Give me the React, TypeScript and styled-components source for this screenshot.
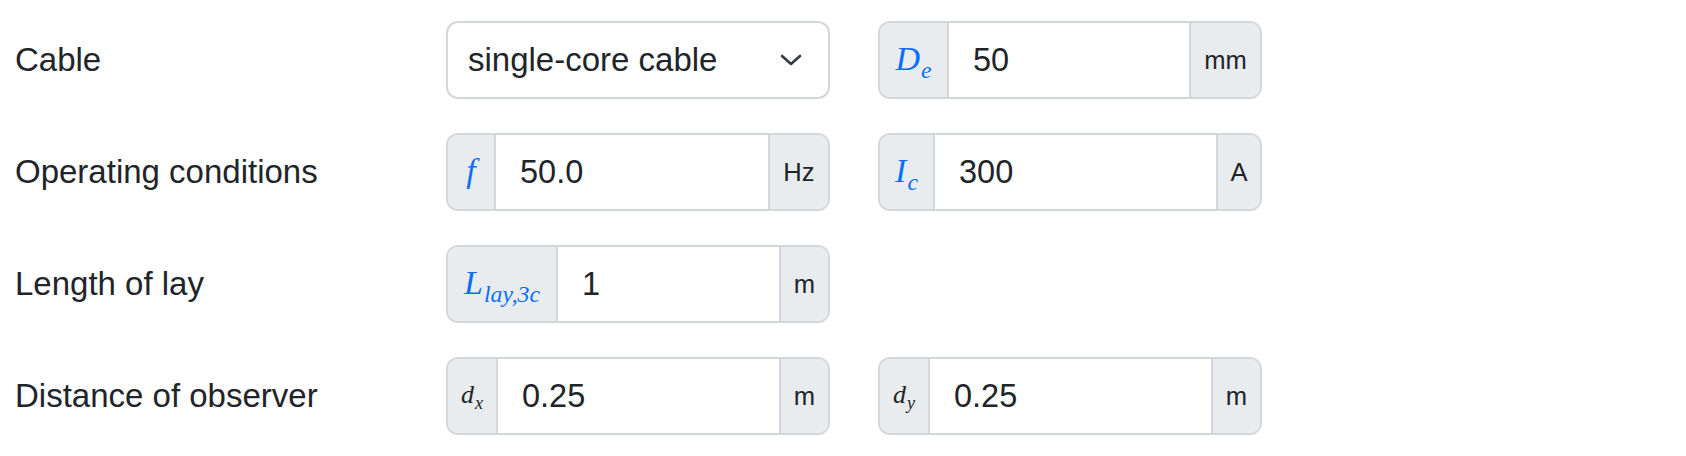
import React from 'react'
import styled, { createGlobalStyle } from 'styled-components'

const GlobalStyle = createGlobalStyle`
    html, body {
        margin: 0;
        padding: 0;
        background: #ffffff;
    }
    body {
        font-family: 'Liberation Sans', Arial, sans-serif;
        color: #212529;
    }
`

const Form = styled.div`
    display: grid;
    grid-template-columns: 383px 384px 384px;
    column-gap: 48px;
    row-gap: 34px;
    padding: 21px 0 21px 15px;
`

const Label = styled.div`
    display: flex;
    align-items: center;
    height: 78px;
    font-size: 33px;
    color: #212529;
`

const Select = styled.div`
    display: flex;
    align-items: center;
    justify-content: space-between;
    box-sizing: border-box;
    height: 78px;
    padding: 0 26px 0 20px;
    border: 2px solid #d3d7dc;
    border-radius: 12px;
    background: #ffffff;
    font-size: 33px;
    color: #212529;
`

const Group = styled.div`
    display: flex;
    align-items: stretch;
    box-sizing: border-box;
    height: 78px;
    border: 2px solid #d3d7dc;
    border-radius: 12px;
    overflow: hidden;
`

const Addon = styled.div<{ $side: 'left' | 'right'; $width: number }>`
    display: flex;
    align-items: center;
    justify-content: center;
    flex: 0 0 ${(p) => p.$width}px;
    box-sizing: border-box;
    background: #e9ecef;
    font-size: 25.6px;
    color: #212529;
    ${(p) => (p.$side === 'left' ? 'border-right' : 'border-left')}: 2px solid #d3d7dc;
`

const Value = styled.div`
    display: flex;
    align-items: center;
    flex: 1;
    padding-left: 24px;
    background: #ffffff;
    font-size: 32.5px;
    color: #212529;
`

const Sym = styled.span<{ $dark?: boolean }>`
    font-family: 'Liberation Serif', 'DejaVu Serif', serif;
    font-style: italic;
    font-size: ${(p) => (p.$dark ? '26px' : '34px')};
    color: ${(p) => (p.$dark ? '#212529' : '#0d6efd')};
    white-space: nowrap;
    margin-top: -2px;

    sub {
        font-size: 0.7em;
        vertical-align: -0.32em;
        line-height: 0;
        margin-left: 1px;
    }
`

const Empty = styled.div``

const Chevron = () => (
    <svg width='22' height='12' viewBox='0 0 22 12' fill='none'>
        <path d='M2 2l9 8 9-8' stroke='#343a40' strokeWidth='2.6' strokeLinecap='round' strokeLinejoin='round' />
    </svg>
)

type Field = {
    sym: string
    sub?: string
    dark?: boolean
    prefix: number
    value: string
    unit: string
    unitWidth: number
}

const InputGroup = ({ sym, sub, dark, prefix, value, unit, unitWidth }: Field) => (
    <Group>
        <Addon $side='left' $width={prefix}>
            <Sym $dark={dark}>
                {sym}
                {sub && <sub>{sub}</sub>}
            </Sym>
        </Addon>
        <Value>{value}</Value>
        <Addon $side='right' $width={unitWidth}>{unit}</Addon>
    </Group>
)

const App = () => (
    <>
        <GlobalStyle />
        <Form>
            <Label>Cable</Label>
            <Select>
                <span>single-core cable</span>
                <Chevron />
            </Select>
            <InputGroup sym='D' sub='e' prefix={69} value='50' unit='mm' unitWidth={71} />

            <Label>Operating conditions</Label>
            <InputGroup sym='f' prefix={48} value='50.0' unit='Hz' unitWidth={60} />
            <InputGroup sym='I' sub='c' prefix={55} value='300' unit='A' unitWidth={44} />

            <Label>Length of lay</Label>
            <InputGroup sym='L' sub='lay,3c' prefix={110} value='1' unit='m' unitWidth={49} />
            <Empty />

            <Label>Distance of observer</Label>
            <InputGroup sym='d' sub='x' dark prefix={50} value='0.25' unit='m' unitWidth={49} />
            <InputGroup sym='d' sub='y' dark prefix={50} value='0.25' unit='m' unitWidth={49} />
        </Form>
    </>
)

export default App
